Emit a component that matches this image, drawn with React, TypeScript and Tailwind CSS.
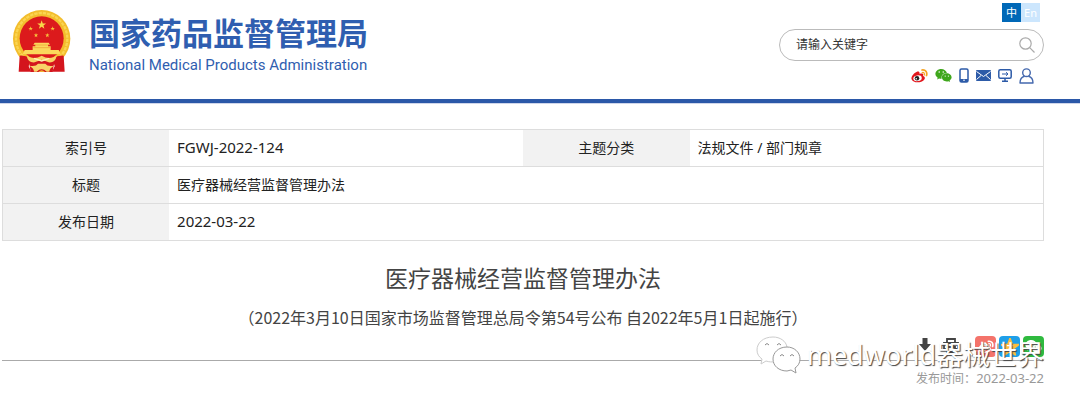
import type { ReactNode } from "react";
import { FaWeixin } from "react-icons/fa";

function star(cx: number, cy: number, r: number) {
  return Array.from({ length: 10 }, (_, i) => {
    const a = (Math.PI / 5) * i - Math.PI / 2;
    const d = i % 2 ? r * 0.4 : r;
    return `${cx + d * Math.cos(a)},${cy + d * Math.sin(a)}`;
  }).join(" ");
}

function Emblem() {
  return (
    <svg className="w-[60px] h-[62px] flex-shrink-0" viewBox="12 13 180 186" aria-hidden="true">
      <circle cx="101" cy="99" r="86" fill="#f3bd2c" />
      <circle cx="101" cy="99" r="77" fill="none" stroke="#fad552" strokeWidth="7" strokeDasharray="10 3" />
      <circle cx="101" cy="98" r="66" fill="#dc1a1c" />
      <polygon points={star(101, 58, 14)} fill="#f7d84a" />
      <polygon points={star(68, 69, 7)} fill="#f7c43c" />
      <polygon points={star(134, 69, 7)} fill="#f7c43c" />
      <polygon points={star(84, 89, 7)} fill="#f7c43c" />
      <polygon points={star(118, 89, 7)} fill="#f7c43c" />
      {/* Gate tower */}
      <path d="M80 111 H122 L126 117 H76Z M82 117 H120 V125 H82Z M74 122 H128 V133 H74Z M50 133 H152 L158 146 H44Z" fill="#fbd85c" />
      <path d="M80 118h42M76 126h50" stroke="#e58a22" strokeWidth="1.500" />
      {/* Ribbon and gear */}
      <path d="M35 150 Q52 148 68 160 L62 182 L70 198 H32Z M167 150 Q150 148 134 160 L140 182 L132 198 H170Z" fill="#d4151d" />
      <path d="M62 162 H140 L134 199 H68Z" fill="#d4151d" />
      <path d="M56 150 Q78 164 101 150 Q124 164 146 150 Q142 172 122 170 L101 162 L80 170 Q60 172 56 150Z" fill="#f9d266" />
      <path d="M78 158 L101 166 L124 158" fill="none" stroke="#fff0b8" strokeWidth="4" />
      <path d="M64 180 Q84 184 90 174 H112 Q118 184 138 180 Q124 188 124 198 H116 Q101 184 86 198 H78 Q78 188 64 180Z" fill="#f8d368" />
      <path d="M91 199 Q101 188 111 199Z" fill="#f3b233" />
    </svg>
  );
}

function WeiboIcon({ className, body, wave, eye }: { className: string; body: string; wave: string; eye: string }) {
  return (
    <svg className={className} viewBox="0 0 34 28" aria-hidden="true">
      <path d="M11 6 C15 4 18 6 17 10 C22 8 26 9 24 14 C28 15 29 19 26 22 C20 29 3 28 1 20 C0 15 6 8 11 6Z" fill={body} />
      <ellipse cx="13" cy="18.500" rx="8.500" ry="5.800" fill={eye} transform="rotate(-8 13 18)" />
      <circle cx="12" cy="18.500" r="4.500" fill={body === "#fff" ? "#fff" : "#222"} />
      <circle cx="10.500" cy="19.500" r="1.500" fill={eye} />
      <path d="M22 2 C29 1 33 6 31 13" fill="none" stroke={wave} strokeWidth="3.500" strokeLinecap="round" />
      <path d="M22.500 7 C26 6 27.500 9 26.500 12" fill="none" stroke={wave} strokeWidth="2.500" strokeLinecap="round" />
    </svg>
  );
}

function PhoneIcon() {
  return (
    <svg className="w-[10px] h-[15px]" viewBox="0 0 10 15" aria-hidden="true">
      <rect x="1" y="1" width="8" height="13" rx="1.500" fill="#fff" stroke="#2d5ba8" strokeWidth="1.500" />
      <path d="M1 11h8v3H1z" fill="#2d5ba8" />
      <circle cx="5" cy="12.300" r=".8" fill="#fff" />
    </svg>
  );
}

function MailIcon() {
  return (
    <svg className="w-[15px] h-[11px]" viewBox="0 0 15 11" aria-hidden="true">
      <rect width="15" height="11" rx="1" fill="#2d5ba8" />
      <path d="M.5 1.500 L7.500 6.500 L14.500 1.500 M.5 9.500 L5 5.500 M14.500 9.500 L10 5.500" fill="none" stroke="#fff" strokeWidth="1" />
    </svg>
  );
}

function ScreenIcon() {
  return (
    <svg className="w-[14px] h-[13px]" viewBox="0 0 14 13" fill="none" stroke="#2d5ba8" aria-hidden="true">
      <rect x=".8" y=".8" width="12.400" height="8.400" rx="1.500" strokeWidth="1.500" />
      <path d="M4 5h5.500M8 3.200 L10 5 L8 6.800" strokeWidth="1" />
      <path d="M7 9v3M4 12.200h6" strokeWidth="1.500" />
    </svg>
  );
}

function UserIcon() {
  return (
    <svg className="w-[15px] h-4" viewBox="0 0 15 16" fill="none" stroke="#4468ae" strokeWidth="1.400" aria-hidden="true">
      <circle cx="7.500" cy="4.700" r="3.800" />
      <path d="M5.500 8.200 C2.500 9 1 11.500 1 15 H14 C14 11.500 12.500 9 9.500 8.200" strokeLinejoin="round" />
    </svg>
  );
}

function IconLink({ label, children }: { label: string; children: ReactNode }) {
  return (
    <a href="#" aria-label={label} className="flex items-center">
      {children}
    </a>
  );
}

function Label({ children }: { children: ReactNode }) {
  return (
    <th scope="row" className="w-[16%] bg-[#f2f2f2] font-normal text-center">
      {children}
    </th>
  );
}

export default function App() {
  return (
    <div className="bg-white text-[#222] font-['Noto_Sans','Noto_Sans_CJK_SC',sans-serif]">
      {/* Header */}
      <header className="flex justify-between border-b-4 border-[#2b58a8] pl-3 pr-9 pb-[15px] shadow-[0_1px_0_#cfd6ea]">
        <a href="#" className="flex items-start gap-[17px] pt-[10px] text-[#2f5eb0]">
          <Emblem />
          <div className="pt-px">
            <h1 className="text-[31px] leading-[42px] font-bold font-['Noto_Sans_CJK_SC',sans-serif]">国家药品监督管理局</h1>
            <p className="mt-1 text-[15px] leading-4 font-['Roboto',sans-serif]">National Medical Products Administration</p>
          </div>
        </a>
        <div className="w-[265px] flex flex-col items-end pt-[3px]">
          <div className="flex mr-1 text-[11px] leading-[19px] text-white">
            <button className="w-[19px] h-[19px] bg-[#0068b7]">中</button>
            <button className="w-[19px] h-[19px] bg-[#cce6fd]">En</button>
          </div>
          <form className="mt-[7px] w-full h-8 flex items-center rounded-full border border-[#bbb] pl-4 pr-2">
            <input
              type="text"
              aria-label="请输入关键字"
              placeholder="请输入关键字"
              className="flex-1 min-w-0 text-xs outline-none placeholder:text-[#333]"
            />
            <button type="button" aria-label="搜索">
              <svg className="w-4 h-4" viewBox="0 0 16 16" fill="none" stroke="#aaa" strokeWidth="1.200">
                <circle cx="6.500" cy="6.500" r="5.700" />
                <path d="M10.700 10.700 L15.500 15.500" />
              </svg>
            </button>
          </form>
          <nav className="mt-[6px] mr-[10px] flex items-center gap-[7px]">
            <IconLink label="微博">
              <WeiboIcon className="w-[17px] h-[14px]" body="#e2161c" wave="#f6a11d" eye="#fff" />
            </IconLink>
            <IconLink label="微信">
              <FaWeixin className="w-[17px] h-[17px] text-[#3fa71c]" />
            </IconLink>
            <IconLink label="移动客户端"><PhoneIcon /></IconLink>
            <IconLink label="邮箱"><MailIcon /></IconLink>
            <IconLink label="电脑版"><ScreenIcon /></IconLink>
            <IconLink label="登录"><UserIcon /></IconLink>
          </nav>
        </div>
      </header>

      <main className="pt-[26px] pl-[2px] pr-9">
        {/* Document info */}
        <table className="w-full table-fixed border-collapse border border-[#ddd] text-sm">
          <tbody>
            <tr className="h-[37px] border-b border-[#ddd]">
              <Label>索引号</Label>
              <td className="w-[34%] pl-2 text-[15px]">FGWJ-2022-124</td>
              <Label>主题分类</Label>
              <td className="w-[34%] pl-2">法规文件 / 部门规章</td>
            </tr>
            <tr className="h-[37px] border-b border-[#ddd]">
              <Label>标题</Label>
              <td colSpan={3} className="pl-2">医疗器械经营监督管理办法</td>
            </tr>
            <tr className="h-[37px]">
              <Label>发布日期</Label>
              <td colSpan={3} className="pl-2 text-[15px]">2022-03-22</td>
            </tr>
          </tbody>
        </table>

        {/* Article heading */}
        <article className="text-center text-[#444] font-['Noto_Sans_CJK_SC',sans-serif]">
          <h2 className="mt-5 text-[23px] leading-8">医疗器械经营监督管理办法</h2>
          <p className="mt-3 text-base leading-6">（2022年3月10日国家市场监督管理总局令第54号公布 自2022年5月1日起施行）</p>
        </article>

        {/* Share bar */}
        <div className="relative mt-[7px]">
          <div className="h-[25px] flex items-start justify-end gap-[3px] border-b border-[#aaa]">
            <button aria-label="下载" className="mr-[9px] mt-[2px]">
              <svg className="w-3 h-[14px]" viewBox="0 0 12 14" fill="#444">
                <path d="M3.500 0h5v6H12L6 13 0 6h3.500z" />
              </svg>
            </button>
            <button aria-label="打印" className="mr-[13px] mt-[2px]">
              <svg className="w-4 h-[15px]" viewBox="0 0 16 15" fill="none" stroke="#444" strokeWidth="1.800">
                <path d="M4 5V1h8v4M4 11H1V5h14v6h-3M4 9h8v5H4z" />
              </svg>
            </button>
            <button aria-label="分享到微博" className="w-[21px] h-[21px] rounded-sm bg-[#f4736b] flex items-center justify-center">
              <WeiboIcon className="w-4 h-[14px]" body="#fff" wave="#fff" eye="#f4736b" />
            </button>
            <button aria-label="分享到QQ空间" className="w-[21px] h-[21px] rounded-sm bg-[#1f9fe8] flex items-center justify-center">
              <svg className="w-[18px] h-[18px]" viewBox="0 0 20 20">
                <polygon points={star(10, 10.5, 10)} fill="#fdbe3d" stroke="#fdbe3d" strokeWidth="2" strokeLinejoin="round" />
                <path d="M6.500 8.500h6l-4.500 4.500h5" fill="none" stroke="#fff" strokeWidth="1.200" />
              </svg>
            </button>
            <button aria-label="分享到微信" className="w-[21px] h-[21px] rounded-sm bg-[#2fba3f] flex items-center justify-center">
              <FaWeixin className="w-[17px] h-[17px] text-white" />
            </button>
          </div>
          <p className="mt-2 text-right text-xs leading-[18px] text-[#999]">
            发布时间：<time className="text-[13px]">2022-03-22</time>
          </p>

          {/* Watermark */}
          <div className="absolute right-0 top-0 flex items-center gap-[5px] pointer-events-none">
            <svg className="w-[46px] h-[38px]" viewBox="0 0 46 38" fill="#fff" stroke="#aaa" strokeWidth="1" aria-hidden="true">
              <path d="M17 1 C7 1 1 7 1 14 C1 18 3 21 6 23 L5 28 L10 25 C13 26 16 26 19 26 L31 11 C30 5 24 1 17 1Z" stroke="#ccc" />
              <path d="M31 11 C22 11 17 17 17 23 C17 30 23 35 31 35 L35 34 L40 37 L39 32 C42 30 44 27 44 23 C44 16 38 11 31 11Z" stroke="#999" />
              <path d="M9 9q2-3 4 0M21 9q2-3 4 0M24 20q2-3 4 0M34 20q2-3 4 0" fill="none" stroke="#888" />
            </svg>
            <span className="text-[27px] leading-8 text-white [text-shadow:1px_1px_1px_#444]">medworld器械世界</span>
          </div>
        </div>
      </main>
    </div>
  );
}
